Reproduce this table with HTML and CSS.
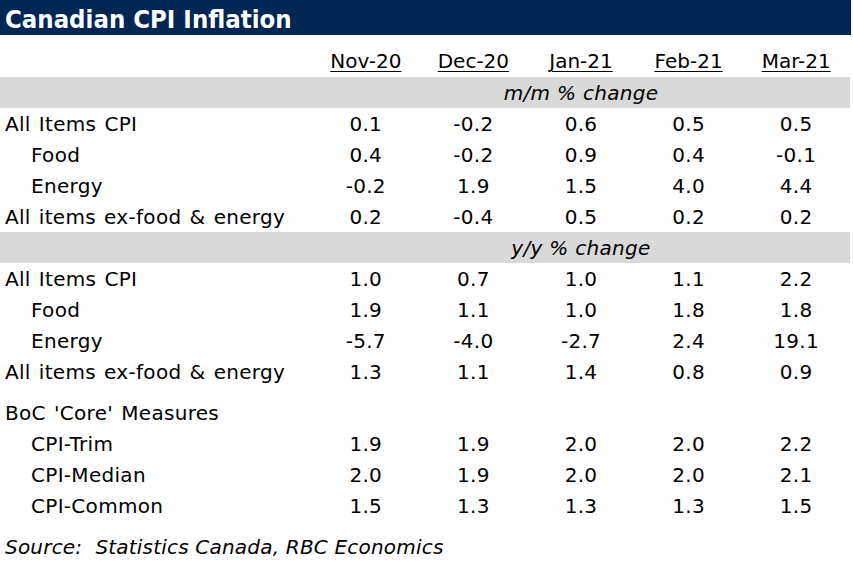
FILE: index.html
```html
<!DOCTYPE html>
<html>
<head>
<meta charset="utf-8">
<link rel="stylesheet" href="styles.css">
</head>
<body>
<div class="sheet">
  <div class="title">Canadian CPI Inflation</div>
  <div class="row head">
    <div></div>
    <div><span class="u">Nov-20</span></div>
    <div><span class="u">Dec-20</span></div>
    <div><span class="u">Jan-21</span></div>
    <div><span class="u">Feb-21</span></div>
    <div><span class="u">Mar-21</span></div>
  </div>
  <div class="row band"><div></div><div class="span">m/m % change</div></div>
  <div class="row"><div class="lbl">All Items CPI</div><div>0.1</div><div>-0.2</div><div>0.6</div><div>0.5</div><div>0.5</div></div>
  <div class="row"><div class="lbl ind">Food</div><div>0.4</div><div>-0.2</div><div>0.9</div><div>0.4</div><div>-0.1</div></div>
  <div class="row"><div class="lbl ind">Energy</div><div>-0.2</div><div>1.9</div><div>1.5</div><div>4.0</div><div>4.4</div></div>
  <div class="row"><div class="lbl">All items ex-food &amp; energy</div><div>0.2</div><div>-0.4</div><div>0.5</div><div>0.2</div><div>0.2</div></div>
  <div class="row band"><div></div><div class="span">y/y % change</div></div>
  <div class="row"><div class="lbl">All Items CPI</div><div>1.0</div><div>0.7</div><div>1.0</div><div>1.1</div><div>2.2</div></div>
  <div class="row"><div class="lbl ind">Food</div><div>1.9</div><div>1.1</div><div>1.0</div><div>1.8</div><div>1.8</div></div>
  <div class="row"><div class="lbl ind">Energy</div><div>-5.7</div><div>-4.0</div><div>-2.7</div><div>2.4</div><div>19.1</div></div>
  <div class="row"><div class="lbl">All items ex-food &amp; energy</div><div>1.3</div><div>1.1</div><div>1.4</div><div>0.8</div><div>0.9</div></div>
  <div class="spacer"></div>
  <div class="row"><div class="lbl">BoC 'Core' Measures</div></div>
  <div class="row"><div class="lbl ind">CPI-Trim</div><div>1.9</div><div>1.9</div><div>2.0</div><div>2.0</div><div>2.2</div></div>
  <div class="row"><div class="lbl ind">CPI-Median</div><div>2.0</div><div>1.9</div><div>2.0</div><div>2.0</div><div>2.1</div></div>
  <div class="row"><div class="lbl ind">CPI-Common</div><div>1.5</div><div>1.3</div><div>1.3</div><div>1.3</div><div>1.5</div></div>
  <div class="spacer"></div>
  <div class="source">Source:&nbsp; Statistics Canada, RBC Economics</div>
</div>
</body>
</html>
```
FILE: styles.css
```css
html, body {
  margin: 0;
  padding: 0;
  background: #ffffff;
}
.sheet {
  width: 851px;
  font-family: "DejaVu Sans", sans-serif;
  font-size: 20px;
  letter-spacing: 0.3px;
  color: #000;
}
.title {
  height: 35px;
  background: #002654;
  color: #fff;
  font-family: "DejaVu Sans Condensed", "DejaVu Sans", sans-serif;
  font-weight: bold;
  font-size: 25.5px;
  letter-spacing: 0;
  line-height: 38px;
  padding-left: 5px;
}
.row {
  display: grid;
  grid-template-columns: 312px repeat(5, 1fr);
  width: 850px;
  height: 31px;
  line-height: 32px;
  text-align: center;
}
.row .lbl {
  text-align: left;
  padding-left: 5px;
  white-space: nowrap;
  word-spacing: 1.5px;
}
.row .ind {
  padding-left: 31px;
}
.head {
  height: 42px;
  line-height: 53px;
  letter-spacing: 0;
}
.u {
  text-decoration: underline;
  text-underline-offset: 3px;
  text-decoration-thickness: 1px;
}
.band {
  background: #d9d9d9;
  font-style: italic;
}
.band .span {
  grid-column: 2 / 7;
}
.spacer {
  height: 10px;
}
.source {
  height: 31px;
  line-height: 32px;
  font-style: italic;
  padding-left: 5px;
  letter-spacing: 0.2px;
}
```
